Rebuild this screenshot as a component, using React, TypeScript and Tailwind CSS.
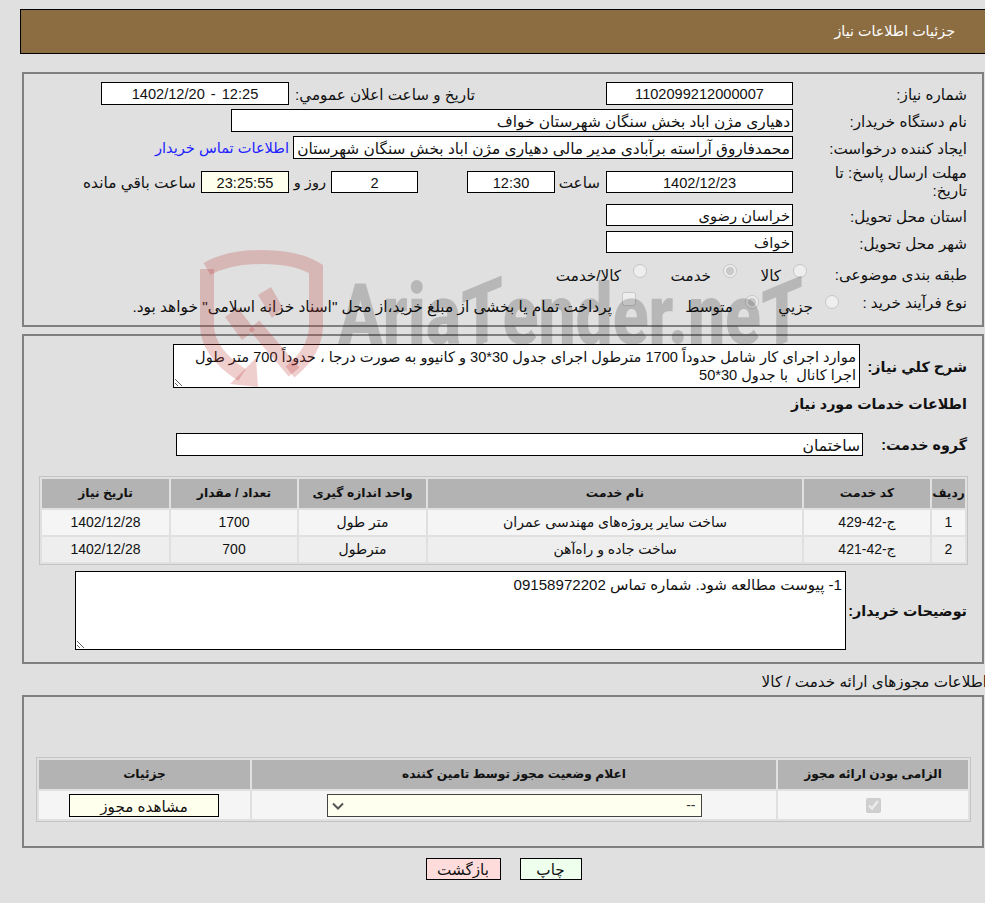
const Box = ({ className, children }: { className: string; children?: React.ReactNode }) => (
  <div className={`h-[23px] shrink-0 overflow-hidden whitespace-nowrap border border-black leading-[23px] ${className}`}>
    {children}
  </div>
);

const Label = ({ className = "", children }: { className?: string; children: React.ReactNode }) => (
  <div className={`shrink-0 whitespace-nowrap leading-[25px] h-[23px] ${className}`}>{children}</div>
);

const Radio = ({ checked = false }: { checked?: boolean }) => (
  <input type="radio" disabled checked={checked} readOnly className="m-0 h-[14px] w-[14px] shrink-0" />
);

const services = [
  { row: "1", code: "ج-42-429", name: "ساخت سایر پروژه‌های مهندسی عمران", unit: "متر طول", qty: "1700", date: "1402/12/28", bg: "bg-[#f5f5f5]" },
  { row: "2", code: "ج-42-421", name: "ساخت جاده و راه‌آهن", unit: "مترطول", qty: "700", date: "1402/12/28", bg: "bg-[#eeeeee]" },
];

// watermark sits over the whole page, like in the original
const Watermark = () => (
  <div className="pointer-events-none absolute left-0 top-0 h-[903px] w-[985px]">
    <svg width="985" height="903" className="absolute left-0 top-0" fill="none">
      <g stroke="rgb(190,50,50)" strokeOpacity="0.24" strokeWidth="14">
        <path d="M207 269 C235 253 290 253 316 269 L316 325 C316 345 305 360 290 372" />
        <path d="M207 269 L207 325 C207 345 222 362 242 375" />
        <path d="M254 325 L294 372" />
      </g>
      <g fill="rgb(190,50,50)" fillOpacity="0.24">
        <path d="M258 387 L230 384 L256 358 Z" />
        <path d="M225 317 L238 308 L255 330 L242 340 Z" />
        <path d="M258 295 L271 287 L283 308 L272 318 Z" />
      </g>
    </svg>
    <div className="absolute left-[338px] top-[250px] h-[94px] w-[480px] overflow-hidden">
      <span
        dir="ltr"
        className="absolute left-0 top-[17px] origin-left scale-x-[0.775] whitespace-nowrap text-[85px] font-black leading-[96px] text-black/[0.18] [font-family:'Roboto',sans-serif]"
      >
        Aria<span className="inline-block -skew-y-[18deg]">T</span>ender.ne<span className="inline-block -skew-y-[18deg]">T</span>
      </span>
    </div>
  </div>
);

export default function App() {
  return (
    <div
      dir="rtl"
      className="relative h-[903px] w-[985px] overflow-hidden bg-[#e0e0e0] pt-[9px] text-[15.2px] text-[#111] [font-family:'Liberation_Sans','DejaVu_Sans',sans-serif]"
    >
      {/* title bar */}
      <div className="ml-[20px] flex h-[45px] items-center border border-r-0 border-black bg-[#8c6d42] pr-[30px] text-[14.3px] text-white">
        جزئیات اطلاعات نیاز
      </div>

      {/* main info */}
      <section className="ml-[22px] mr-[1px] mt-[18px] h-[255px] border-2 border-[#808080] pr-[15px] pt-[8px]">
        <div className="flex">
          <Label className="w-[174px]">شماره نیاز:</Label>
          <Box className="w-[187px] bg-white text-center text-[14.6px]">1102099212000007</Box>
          <Label className="mr-[131px] w-[186px]">تاریخ و ساعت اعلان عمومي:</Label>
          <Box className="w-[188px] bg-white text-center text-[14.6px] [word-spacing:2px]">12:25 - 1402/12/20</Box>
        </div>
        <div className="mt-[4px] flex">
          <Label className="w-[174px]">نام دستگاه خریدار:</Label>
          <Box className="w-[562px] bg-white pr-[2px] text-[15.4px]">دهیاری مژن اباد بخش سنگان شهرستان خواف</Box>
        </div>
        <div className="mt-[4px] flex">
          <Label className="w-[174px]">ایجاد کننده درخواست:</Label>
          <Box className="w-[500px] bg-white pr-[2px] text-[15.4px]">محمدفاروق آراسته برآبادی مدیر مالی دهیاری مژن اباد بخش سنگان شهرستان خواف</Box>
          <Label className="mr-[4px] text-[14.6px] text-[#2222ff]">اطلاعات تماس خریدار</Label>
        </div>
        <div className="mt-[4px] flex h-[37px] items-center">
          <div className="w-[174px] shrink-0 pl-[20px] leading-[18px]">مهلت ارسال پاسخ: تا تاریخ:</div>
          <Box className="!h-[22px] w-[187px] bg-white text-center text-[14.6px]">1402/12/23</Box>
          <Label className="w-[51px] pr-[6px]">ساعت</Label>
          <Box className="!h-[22px] w-[88px] bg-white text-center text-[14.6px]">12:30</Box>
          <div className="w-[49px] shrink-0" />
          <Box className="!h-[22px] w-[87px] bg-white text-center text-[14.6px]">2</Box>
          <Label className="w-[42px] pr-[5px] text-[14.6px]">روز و</Label>
          <Box className="!h-[22px] w-[88px] bg-[#ffffee] text-center text-[14.6px]">23:25:55</Box>
          <Label className="pr-[5px] text-[15.4px]">ساعت باقي مانده</Label>
        </div>
        <div className="mt-[4px] flex">
          <Label className="w-[174px]">استان محل تحویل:</Label>
          <Box className="!h-[22px] w-[187px] bg-white pr-[2px] text-[14.7px]">خراسان رضوی</Box>
        </div>
        <div className="mt-[4px] flex">
          <Label className="w-[174px]">شهر محل تحویل:</Label>
          <Box className="!h-[22px] w-[187px] bg-white pr-[2px] text-[14.7px]">خواف</Box>
        </div>
        <div className="mt-[9px] flex items-start">
          <Label className="w-[160px] -translate-y-[1px]">طبقه بندی موضوعی:</Label>
          <div className="flex pt-[1px]">
            <Radio />
            <Label className="mr-[12px] mt-[-1px] w-[44px]">کالا</Label>
            <Radio checked />
            <Label className="mr-[12px] mt-[-1px] w-[64px]">خدمت</Label>
            <Radio />
            <Label className="mr-[12px] mt-[-1px]">کالا/خدمت</Label>
          </div>
        </div>
        <div className="mt-[5px] flex items-start">
          <Label className="w-[128px] -translate-y-[1px]">نوع فرآیند خرید :</Label>
          <div className="flex pt-[4px]">
            <Radio />
            <Label className="mr-[12px] mt-[-4px] w-[54px] translate-y-[3px]">جزيي</Label>
            <Radio checked />
            <Label className="mr-[12px] mt-[-4px] w-[97px] translate-y-[3px]">متوسط</Label>
            <input type="checkbox" disabled className="m-0 mt-[-3px] h-[14px] w-[14px] shrink-0" />
            <Label className="mr-[10px] mt-[-4px] translate-y-[3px] text-[15.4px]">پرداخت تمام یا بخشی از مبلغ خرید،از محل "اسناد خزانه اسلامی" خواهد بود.</Label>
          </div>
        </div>
      </section>

      {/* description and services */}
      <section className="ml-[22px] mr-[1px] mt-[7px] h-[330px] border-2 border-[#808080] pr-[15px] pt-[8px]">
        <div className="flex items-center">
          <Label className="w-[107px] text-[14.3px] font-bold">شرح کلي نیاز:</Label>
          <textarea
            readOnly
            className="block h-[44px] w-[687px] border border-black bg-white px-[3px] pt-[3px] text-[14.6px] leading-[18px] text-[#111] outline-none"
            value="موارد اجرای کار شامل حدوداً 1700 مترطول اجرای جدول 30*30 و کانیوو به صورت درجا ، حدوداً 700 متر طول اجرا کانال  با جدول 30*50"
          />
        </div>
        <div className="mt-[4px] h-[23px] text-[14.3px] font-bold leading-[25px]">اطلاعات خدمات مورد نیاز</div>
        <div className="mt-[18px] flex items-center">
          <Label className="w-[104px] text-[14.3px] font-bold">گروه خدمت:</Label>
          <Box className="w-[687px] bg-white pr-[2px] text-[15.6px]">ساختمان</Box>
        </div>
        <table className="mr-[-1px] mt-[20px] w-[929px] table-fixed border-separate border-spacing-[2px] border border-[#c4c4c4] text-center text-[14px]">
          <colgroup>
            <col className="w-[33px]" />
            <col className="w-[126px]" />
            <col className="w-[374px]" />
            <col className="w-[127px]" />
            <col className="w-[126px]" />
            <col />
          </colgroup>
          <thead>
            <tr className="h-[29px] bg-[#b3b3b3] text-[12.3px] font-bold">
              <th className="p-0">ردیف</th>
              <th className="p-0">کد خدمت</th>
              <th className="p-0">نام خدمت</th>
              <th className="p-0">واحد اندازه گیری</th>
              <th className="p-0">تعداد / مقدار</th>
              <th className="p-0">تاریخ نیاز</th>
            </tr>
          </thead>
          <tbody>
            {services.map((s) => (
              <tr key={s.row} className={`h-[25px] ${s.bg}`}>
                <td className="p-0">{s.row}</td>
                <td className="p-0">{s.code}</td>
                <td className="p-0">{s.name}</td>
                <td className="p-0">{s.unit}</td>
                <td className="p-0">{s.qty}</td>
                <td className="p-0">{s.date}</td>
              </tr>
            ))}
          </tbody>
        </table>
        <div className="mt-[6px] flex items-center">
          <Label className="w-[121px] text-[14.3px] font-bold">توضیحات خریدار:</Label>
          <textarea
            readOnly
            className="block h-[79px] w-[771px] border border-black bg-white px-[3px] pt-[3px] text-[15.1px] leading-[20px] text-[#111] outline-none"
            value="1- پیوست مطالعه شود. شماره تماس 09158972202"
          />
        </div>
      </section>

      {/* licences */}
      <div className="mr-[-2px] mt-[6px] h-[25px] whitespace-nowrap leading-[23px]">اطلاعات مجوزهای ارائه خدمت / کالا</div>
      <section className="ml-[22px] mr-[1px] h-[153px] border-2 border-[#808080] pt-[60px]">
        <table className="mr-[11px] w-[935px] table-fixed border-separate border-spacing-[2px] border border-[#c4c4c4] text-center">
          <colgroup>
            <col className="w-[190px]" />
            <col className="w-[524px]" />
            <col />
          </colgroup>
          <thead>
            <tr className="h-[29px] bg-[#b3b3b3] text-[12.2px] font-bold">
              <th className="p-0">الزامی بودن ارائه مجوز</th>
              <th className="p-0">اعلام وضعیت مجوز توسط تامین کننده</th>
              <th className="p-0">جزئیات</th>
            </tr>
          </thead>
          <tbody>
            <tr className="h-[28px] bg-[#f5f5f5]">
              <td className="p-0">
                <input type="checkbox" checked disabled readOnly className="m-0 h-[15px] w-[15px] align-middle" />
              </td>
              <td className="p-0">
                <div className="relative mx-auto h-[23px] w-[375px]">
                  <select className="block h-[23px] w-full appearance-none border border-[#444] bg-[#fffff0] pr-[5px] text-[14px] text-[#333]">
                    <option>--</option>
                  </select>
                  <svg width="14" height="9" viewBox="0 0 14 9" fill="none" className="pointer-events-none absolute left-[4px] top-[8px]">
                    <path d="M2 1.5 L7 6.5 L12 1.5" stroke="#555" strokeWidth="2" />
                  </svg>
                </div>
              </td>
              <td className="p-0">
                <div className="ml-[30px] mr-auto h-[23px] w-[150px] border border-black bg-[#ffffee] leading-[23px]">مشاهده مجوز</div>
              </td>
            </tr>
          </tbody>
        </table>
      </section>

      {/* actions */}
      <div className="mt-[10px] flex justify-center gap-[19px] pl-[22px]">
        <button className="h-[22px] w-[62px] border border-black bg-[#eeffee] leading-[22px] text-[#111]">چاپ</button>
        <button className="h-[22px] w-[75px] border border-black bg-[#ffdcdc] leading-[22px] text-[#111]">بازگشت</button>
      </div>

      <Watermark />
    </div>
  );
}
